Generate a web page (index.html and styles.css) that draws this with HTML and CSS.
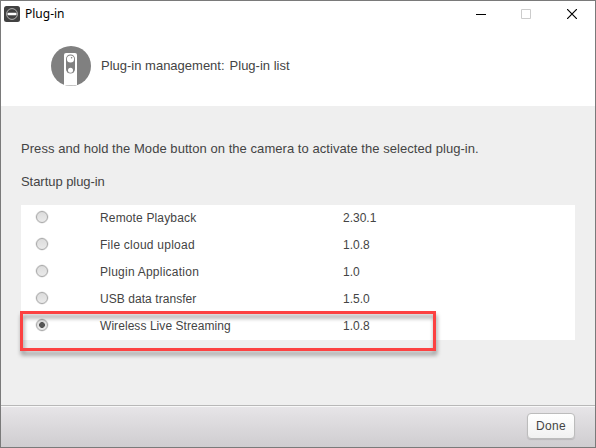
FILE: index.html
```html
<!DOCTYPE html>
<html lang="en">
<head>
<meta charset="utf-8">
<title>Plug-in</title>
<link rel="stylesheet" href="styles.css">
</head>
<body>
<div class="window">
  <header class="titlebar">
    <svg class="app-icon" width="16" height="16" viewBox="0 0 16 16">
      <rect width="16" height="16" rx="2.5" fill="#414141"/>
      <circle cx="8" cy="8" r="5.4" fill="none" stroke="#b4b4b4" stroke-width="1"/>
      <rect x="3.5" y="6.7" width="9" height="2.6" rx="1" fill="#fff"/>
    </svg>
    <span class="window-title">Plug-in</span>
    <div class="controls">
      <svg width="10" height="10"><path d="M0 5.5H10" stroke="#000"/></svg>
      <svg width="10" height="10"><path d="M.5.5H9.5V9.5H.5Z" fill="none" stroke="#ccc"/></svg>
      <svg class="close" width="10" height="10"><path d="M0 0L10 10M10 0L0 10" stroke="#000" stroke-width="1.2"/></svg>
    </div>
  </header>
  <section class="heading">
    <svg width="40" height="40" viewBox="0 0 40 40">
      <circle cx="20" cy="20" r="20" fill="#808080"/>
      <path d="M13 39V9Q13 7 15 7H24Q26 7 26 9V39Q20 40 13 39Z" fill="#fff"/>
      <rect x="15" y="8.5" width="9" height="19" rx="4.5" fill="#808080"/>
      <circle cx="19.5" cy="13" r="3.6" fill="#fff"/>
      <circle cx="20.6" cy="11.8" r=".8" fill="#808080"/>
      <circle cx="19.5" cy="24.2" r="2.5" fill="#fff"/>
    </svg>
    <h1><span>Plug-in management:</span><span>Plug-in list</span></h1>
  </section>
  <main class="content">
    <p class="instruction">Press and hold the Mode button on the camera to activate the selected plug-in.</p>
    <p class="startup">Startup plug-in</p>
    <div class="list">
      <label class="row"><input type="radio" name="plugin"><span>Remote Playback</span><span class="ver">2.30.1</span></label>
      <label class="row"><input type="radio" name="plugin"><span class="wide">File cloud upload</span><span class="ver">1.0.8</span></label>
      <label class="row"><input type="radio" name="plugin"><span class="wide">Plugin Application</span><span class="ver">1.0</span></label>
      <label class="row"><input type="radio" name="plugin"><span class="narrow">USB data transfer</span><span class="ver">1.5.0</span></label>
      <label class="row"><input type="radio" name="plugin" checked><span class="narrow">Wireless Live Streaming</span><span class="ver">1.0.8</span></label>
      <div class="highlight"></div>
    </div>
  </main>
  <footer class="footer"><button>Done</button></footer>
</div>
</body>
</html>
```

FILE: styles.css
```css
* { box-sizing: border-box; }
body { margin: 0; font-family: "Liberation Sans", Arial, sans-serif; font-size: 13px; color: #444; }
.window { width: 596px; height: 448px; border: 1px solid #7a7a7a; background: #efefef; display: flex; flex-direction: column; overflow: hidden; }
svg { display: block; flex: none; }
.titlebar { height: 25px; background: #fff; display: flex; align-items: center; padding: 0 18px 0 3px; }
.window-title { margin-left: 5px; font: 12px/16px "Noto Sans", sans-serif; color: #000; }
.controls { display: flex; gap: 35px; margin-left: auto; }
.close { margin-left: 1px; }
.heading { height: 80px; background: #fff; display: flex; align-items: flex-start; padding: 20px 0 0 50px; }
h1 { margin: 12px 0 0 10px; display: flex; gap: 5px; font-size: 13px; line-height: 16px; font-weight: normal; white-space: nowrap; }
.content { height: 299px; padding: 35px 20px 0; }
p { margin: 0; line-height: 16px; white-space: nowrap; }
.instruction { letter-spacing: .05px; }
.startup { margin-top: 17px; letter-spacing: -.05px; }
.list { position: relative; width: 554px; height: 135px; margin-top: 15px; background: #fff; }
.row { height: 27px; display: grid; grid-template-columns: 64px 243px 1fr; align-items: start; padding: 5px 0 0 15px; font-size: 12px; line-height: 16px; letter-spacing: .15px; }
.wide { letter-spacing: .24px; }
.narrow { letter-spacing: .06px; }
.ver { letter-spacing: 0; }
input { appearance: none; width: 12px; height: 12px; margin: 1px 0 0; border: 1px solid #a8a8a8; border-radius: 50%; background: linear-gradient(#dcdcdc, #eaeaea); box-shadow: 0 0 0 .5px #ddd; }
input:checked { background: radial-gradient(circle, #555 0 2.6px, transparent 3.2px), linear-gradient(#dcdcdc, #eaeaea); }
.highlight { position: absolute; left: -1px; top: 106px; width: 416px; height: 40px; border: 3px solid #fc4242; filter: drop-shadow(1px 4px 2px rgba(0, 0, 0, .4)); pointer-events: none; }
.footer { height: 42px; border-top: 1px solid #b8b8b8; box-shadow: inset 0 1px #f8f8f8; background: linear-gradient(#e7e5e8, #cfcdd0); padding: 7px 20px 0; display: flex; justify-content: flex-end; }
button { width: 48px; height: 26px; padding: 0; border: 1px solid #bcbcbc; border-radius: 4px; background: linear-gradient(#fff, #f1f1f1); color: #444; font: 12px "Liberation Sans", sans-serif; letter-spacing: .3px; box-shadow: 0 1px 1px rgba(0, 0, 0, .12); }
```
